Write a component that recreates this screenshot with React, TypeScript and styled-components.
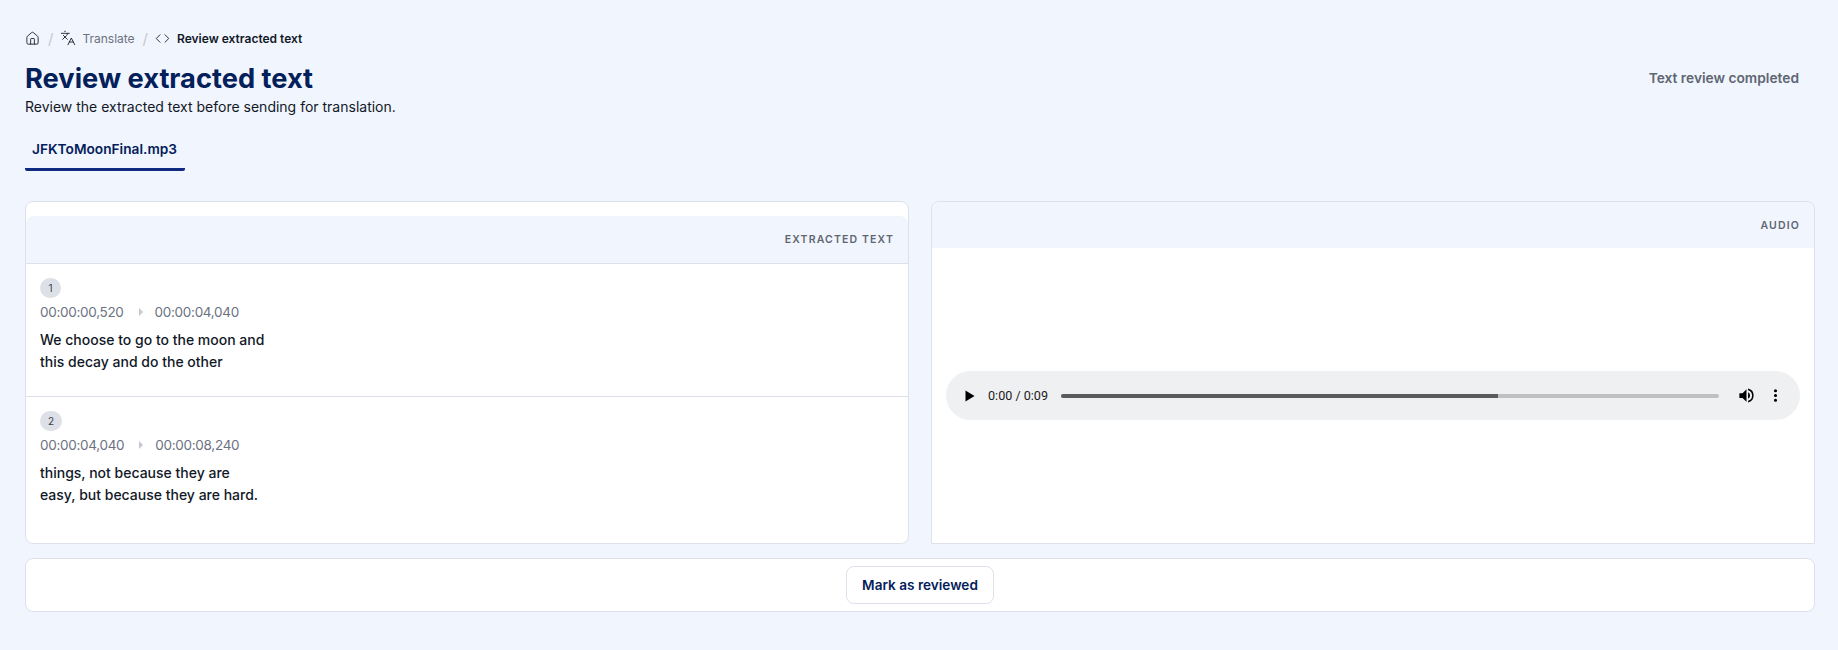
import React from "react";
import styled, { createGlobalStyle } from "styled-components";
import { House, Languages, Code } from "lucide-react";

const Global = createGlobalStyle`
  html, body { margin: 0; padding: 0; background: #f1f5fd; }
  body { font-family: Inter, "Noto Sans", sans-serif; color: #111827; -webkit-font-smoothing: antialiased; }
  * { box-sizing: border-box; }
`;

const Page = styled.div`
  width: 1838px;
  height: 650px;
  padding: 28px 23px 0 25px;
  background: #f1f5fd;
  overflow: hidden;
`;

const Crumbs = styled.nav`
  display: flex;
  align-items: center;
  height: 20px;
  font-size: 12px;
`;

const CrumbIcon = styled.span`
  display: flex;
  color: #1f2937;
  margin-right: 6px;
  &:first-child { margin-right: 0; }
`;

const Slash = styled.span`
  color: #c3c8d1;
  font-size: 15px;
  margin: 0 7px 0 8px;
`;

const CrumbLink = styled.span`
  color: #6b7280;
`;

const CrumbCurrent = styled.span`
  margin-left: 1px;
  color: #111827;
  font-weight: 600;
  font-size: 12px;
`;

const Header = styled.header`
  display: flex;
  justify-content: space-between;
  align-items: flex-start;
  margin-top: 13px;
  padding-right: 16px;
`;

const Title = styled.h1`
  margin: 0;
  font-size: 27.25px;
  line-height: 36px;
  font-weight: 700;
  color: #03205b;
`;

const Status = styled.div`
  margin-top: 7px;
  font-size: 13.75px;
  line-height: 20px;
  font-weight: 600;
  color: #5f6673;
`;

const Subtitle = styled.p`
  margin: 0;
  font-size: 14px;
  line-height: 20px;
  color: #111827;
`;

const Tabs = styled.div`
  display: flex;
  margin-top: 10px;
`;

const Tab = styled.div`
  width: 160px;
  height: 44px;
  padding: 12px 0 0 7px;
  font-size: 13.7px;
  line-height: 20px;
  font-weight: 600;
  color: #03205b;
  border-bottom: 3px solid #0f2a80;
  border-radius: 0 0 2px 2px;
`;

const Columns = styled.div`
  display: grid;
  grid-template-columns: 884px 884px;
  gap: 22px;
  margin-top: 30px;
  height: 343px;
`;

const Panel = styled.section<{ $inset?: boolean }>`
  display: flex;
  flex-direction: column;
  background: #fff;
  border: 1px solid #dde1e9;
  border-radius: ${(p) => (p.$inset ? "8px" : "8px 8px 0 0")};
  overflow: hidden;
  padding-top: ${(p) => (p.$inset ? "14px" : "0")};
`;

const PanelHead = styled.div<{ $ruled?: boolean }>`
  flex: none;
  height: ${(p) => (p.$ruled ? "48px" : "46px")};
  display: flex;
  align-items: center;
  justify-content: flex-end;
  padding-right: 14px;
  background: #f1f5fd;
  border-radius: ${(p) => (p.$ruled ? "8px 8px 0 0" : "0")};
  border-bottom: ${(p) => (p.$ruled ? "1px solid #dde1e9" : "none")};
  font-size: 10.5px;
  font-weight: 600;
  letter-spacing: 1.15px;
  color: #5f6673;
`;

const Cue = styled.div<{ $tall?: boolean }>`
  flex: none;
  height: ${(p) => (p.$tall ? "148px" : "132px")};
  padding: 14px 14px 0;
  & + & { border-top: 1px solid #dde1e9; }
`;

const Badge = styled.span`
  display: flex;
  width: fit-content;
  align-items: center;
  justify-content: center;
  height: 20px;
  min-width: 21px;
  padding: 0 8px;
  border-radius: 10px;
  background: #dde0e6;
  font-size: 10px;
  color: #374151;
`;

const Times = styled.div`
  display: flex;
  align-items: center;
  height: 20px;
  margin-top: 4px;
  font-size: 13.5px;
  letter-spacing: -0.3px;
  color: #6b7280;
`;

const Caret = styled.span`
  width: 0;
  height: 0;
  margin: 0 12px 0 15px;
  border-left: 4px solid #c3c8d1;
  border-top: 4px solid transparent;
  border-bottom: 4px solid transparent;
`;

const CueText = styled.p`
  margin: 7px 0 0;
  font-size: 14px;
  line-height: 22px;
  font-weight: 500;
  color: #111827;
`;

const AudioBody = styled.div`
  flex: 1;
  display: flex;
  align-items: center;
  padding: 0 14px;
`;

const Player = styled.div`
  flex: 1;
  height: 49px;
  display: flex;
  align-items: center;
  padding: 0 15px 0 18px;
  border-radius: 25px;
  background: #eff0f2;
`;

const PlayTime = styled.span`
  margin: 0 13px 0 12px;
  font-family: Roboto, "Liberation Sans", sans-serif;
  font-size: 12.6px;
  color: #1c1c1c;
  white-space: nowrap;
`;

const Track = styled.div`
  flex: 1;
  height: 4px;
  border-radius: 2px;
  background: #c0c0c0;
  overflow: hidden;
`;

const Fill = styled.div`
  height: 100%;
  background: #5a5a5a;
`;

const CtrlIcon = styled.svg<{ $gap?: number }>`
  flex: none;
  display: block;
  margin-left: ${(p) => p.$gap ?? 0}px;
`;

const Actions = styled.div`
  display: flex;
  justify-content: center;
  align-items: center;
  height: 54px;
  margin-top: 14px;
  background: #fff;
  border: 1px solid #dde1e9;
  border-radius: 8px;
`;

const Button = styled.button`
  width: 148px;
  height: 38px;
  padding: 0;
  background: #fff;
  border: 1px solid #dde1e9;
  border-radius: 8px;
  font-family: inherit;
  font-size: 13.6px;
  font-weight: 600;
  color: #03205b;
`;

export default function App() {
  return (
    <Page>
      <Global />
      <Crumbs>
        <CrumbIcon><House size={15} strokeWidth={1.5} /></CrumbIcon>
        <Slash>/</Slash>
        <CrumbIcon><Languages size={16} strokeWidth={1.4} /></CrumbIcon>
        <CrumbLink>Translate</CrumbLink>
        <Slash>/</Slash>
        <CrumbIcon><Code size={15} strokeWidth={1.5} /></CrumbIcon>
        <CrumbCurrent>Review extracted text</CrumbCurrent>
      </Crumbs>
      <Header>
        <Title>Review extracted text</Title>
        <Status>Text review completed</Status>
      </Header>
      <Subtitle>Review the extracted text before sending for translation.</Subtitle>
      <Tabs><Tab>JFKToMoonFinal.mp3</Tab></Tabs>
      <Columns>
        <Panel $inset>
          <PanelHead $ruled>EXTRACTED TEXT</PanelHead>
          <Cue>
            <Badge>1</Badge>
            <Times>00:00:00,520<Caret />00:00:04,040</Times>
            <CueText>We choose to go to the moon and<br />this decay and do the other</CueText>
          </Cue>
          <Cue $tall>
            <Badge>2</Badge>
            <Times>00:00:04,040<Caret />00:00:08,240</Times>
            <CueText>things, not because they are<br />easy, but because they are hard.</CueText>
          </Cue>
        </Panel>
        <Panel>
          <PanelHead>AUDIO</PanelHead>
          <AudioBody>
            <Player>
              <CtrlIcon width="12" height="12" viewBox="0 0 12 12"><path d="M1.5.5v11l9-5.5z" fill="#000" /></CtrlIcon>
              <PlayTime>0:00 / 0:09</PlayTime>
              <Track><Fill style={{ width: `${(436 / 657) * 100}%` }} /></Track>
              <CtrlIcon width="19" height="19" viewBox="0 0 24 24" $gap={18}>
                <path d="M3 9v6h4l5 5V4L7 9H3zm13.5 3A4.5 4.5 0 0 0 14 7.97v8.05A4.5 4.5 0 0 0 16.5 12zM14 3.23v2.06a7 7 0 0 1 0 13.42v2.06a9 9 0 0 0 0-17.54z" fill="#000" />
              </CtrlIcon>
              <CtrlIcon width="19" height="19" viewBox="0 0 24 24" $gap={10}>
                <path d="M12 8a2 2 0 1 0 0-4 2 2 0 0 0 0 4zm0 2a2 2 0 1 0 0 4 2 2 0 0 0 0-4zm0 6a2 2 0 1 0 0 4 2 2 0 0 0 0-4z" fill="#000" />
              </CtrlIcon>
            </Player>
          </AudioBody>
        </Panel>
      </Columns>
      <Actions><Button>Mark as reviewed</Button></Actions>
    </Page>
  );
}
